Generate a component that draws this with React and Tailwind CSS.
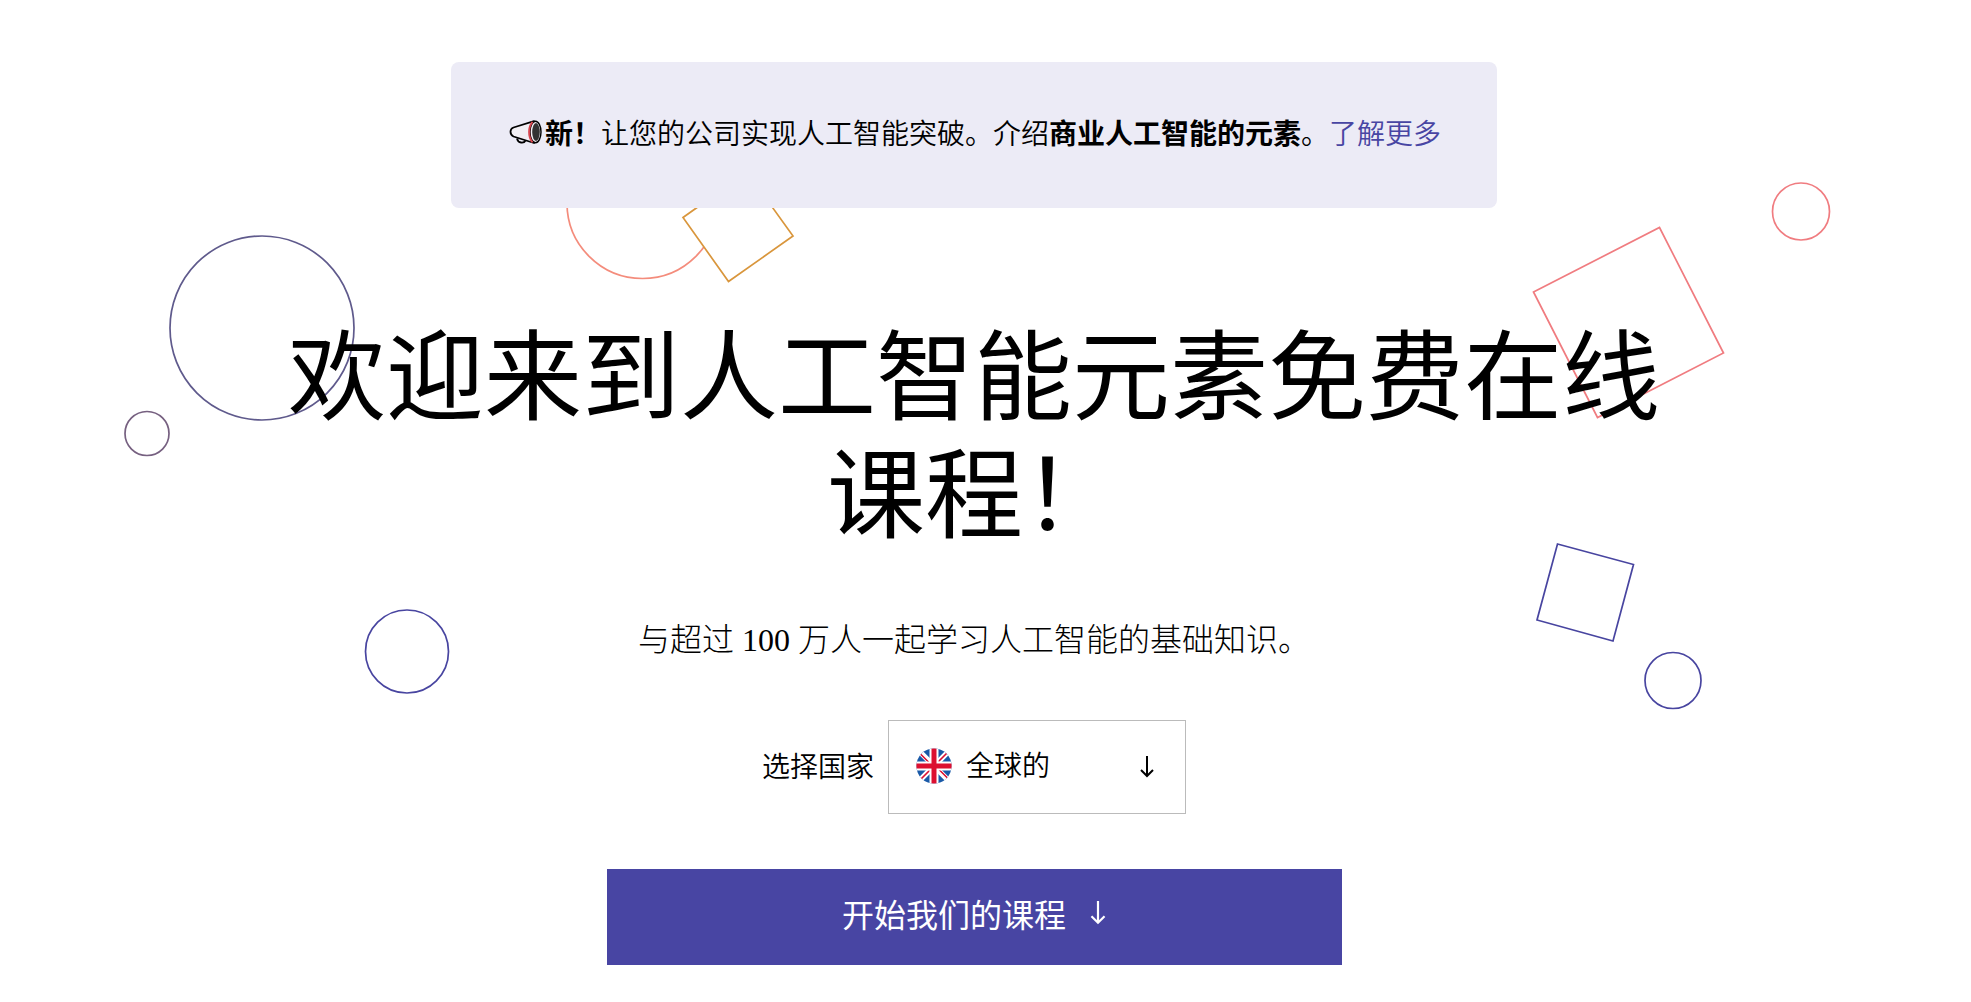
import React from 'react';

const countries = ['全球的'];

const Megaphone = () => (
  <svg viewBox="0 0 36 28" className="w-9 h-7 shrink-0" fill="none" aria-hidden="true">
    <path d="M10 20.500c1 5 7 5 8.500 2" stroke="#000" strokeWidth="1.800" />
    <path
      d="M27 3.200L6.500 9.500C2.500 11 2.500 16.500 6.500 18.500L27 25Z"
      fill="#f2eff4"
      stroke="#000"
      strokeWidth="1.800"
      strokeLinejoin="round"
    />
    <ellipse cx="28.500" cy="14" rx="5.500" ry="10.800" fill="#f2eff4" stroke="#000" strokeWidth="1.400" />
    <path d="M25.500 3.800c-4.500 5-4.500 15.500 0 20.500" stroke="#d8474f" strokeWidth="2" />
    <ellipse cx="29" cy="14" rx="3.800" ry="9" fill="#333" />
  </svg>
);

const UkFlag = ({ className }) => (
  <svg viewBox="0 0 36 36" className={className} aria-hidden="true">
    <clipPath id="flag-round">
      <circle cx="18" cy="18" r="17.600" />
    </clipPath>
    <g clipPath="url(#flag-round)">
      <rect width="36" height="36" fill="#1a5aa8" />
      <path d="M0 0l36 36M36 0L0 36" stroke="#fff" strokeWidth="5.400" />
      <path d="M3 4.500l12 12M33 3L20 16M3 33l13-13M33 31.500L21 19.500" stroke="#dc1030" strokeWidth="1.600" />
      <path d="M18 0v36M0 18h36" stroke="#fff" strokeWidth="9" />
      <path d="M18 0v36M0 18h36" stroke="#dc1030" strokeWidth="5" />
    </g>
  </svg>
);

const ArrowDown = ({ className }) => (
  <svg viewBox="0 0 14 22" className={className} fill="none" stroke="currentColor" aria-hidden="true">
    <path d="M7 0v20M1 14l6 6 6-6" />
  </svg>
);

const Shapes = () => (
  <svg
    viewBox="0 0 1971 1002"
    className="absolute left-0 top-0 w-full h-auto pointer-events-none"
    fill="none"
    strokeWidth="1.700"
    aria-hidden="true"
  >
    <circle cx="262" cy="328" r="92" stroke="#5f5a8c" />
    <circle cx="147" cy="433.500" r="22" stroke="#766080" />
    <circle cx="407" cy="651.500" r="41.500" stroke="#4845a0" />
    <circle cx="642.500" cy="203" r="75.500" stroke="#f48c7c" />
    <path d="M683 217.500L747 172L793 236L728.500 281.500Z" fill="#fff" stroke="#d9963c" />
    <path d="M1533.500 292L1659.500 227.500L1723.500 353L1597.500 417.500Z" stroke="#f07c80" />
    <circle cx="1801" cy="211.500" r="28.500" stroke="#f07c80" />
    <path d="M1557.500 544L1633.500 564.500L1613 641L1537 620Z" stroke="#4845a0" />
    <circle cx="1673" cy="680.500" r="28" stroke="#4845a0" />
  </svg>
);

const App = () => {
  return (
    <main className="relative min-h-screen bg-white text-black font-['Noto_Sans_CJK_SC',sans-serif] overflow-hidden">
      <Shapes />

      <div className="relative flex flex-col items-center pt-[62px] pr-[23px] pb-9">
        {/* Announcement */}
        <div className="flex items-center justify-center w-full max-w-[1046px] min-h-[146px] pb-1.5 rounded-lg bg-[#ecebf6]">
          <Megaphone />
          <p className="ml-0.5 text-[28px] leading-10 font-[350]">
            <strong className="font-bold">新！</strong>让您的公司实现人工智能突破。介绍
            <strong className="font-bold">商业人工智能的元素</strong>。
            <a href="#business" className="text-[#4845a3]">了解更多</a>
          </p>
        </div>

        {/* Title */}
        <h1 className="mt-[102px] max-w-[1400px] text-center text-[98px] leading-[118px]">
          欢迎来到人工智能元素免费在线课程！
        </h1>

        <p className="mt-[74px] text-center text-[32px] leading-10 font-['Liberation_Serif','Noto_Sans_CJK_SC',serif] font-light">
          与超过 100 万人一起学习人工智能的基础知识。
        </p>

        {/* Country */}
        <div className="flex items-center gap-3.5 mt-[60px] text-[28px] font-[350]">
          <label htmlFor="country" className="pb-1">选择国家</label>
          <div className="relative">
            <select
              id="country"
              className="block appearance-none w-[298px] h-[94px] pl-[77px] pr-12 pb-1.5 bg-white border border-[#bbb] cursor-pointer"
            >
              {countries.map((name) => (
                <option key={name}>{name}</option>
              ))}
            </select>
            <UkFlag className="absolute left-7 top-7 w-9 h-9 pointer-events-none" />
            <ArrowDown className="absolute right-8 top-9 w-3.5 h-[22px] stroke-2 pointer-events-none" />
          </div>
        </div>

        <button className="flex items-center justify-center gap-6 w-full max-w-[735px] h-24 mt-[55px] pb-2 bg-[#4845a3] text-white text-[32px] cursor-pointer">
          开始我们的课程
          <ArrowDown className="w-4 h-6 stroke-2" />
        </button>
      </div>
    </main>
  );
};

export default App;
